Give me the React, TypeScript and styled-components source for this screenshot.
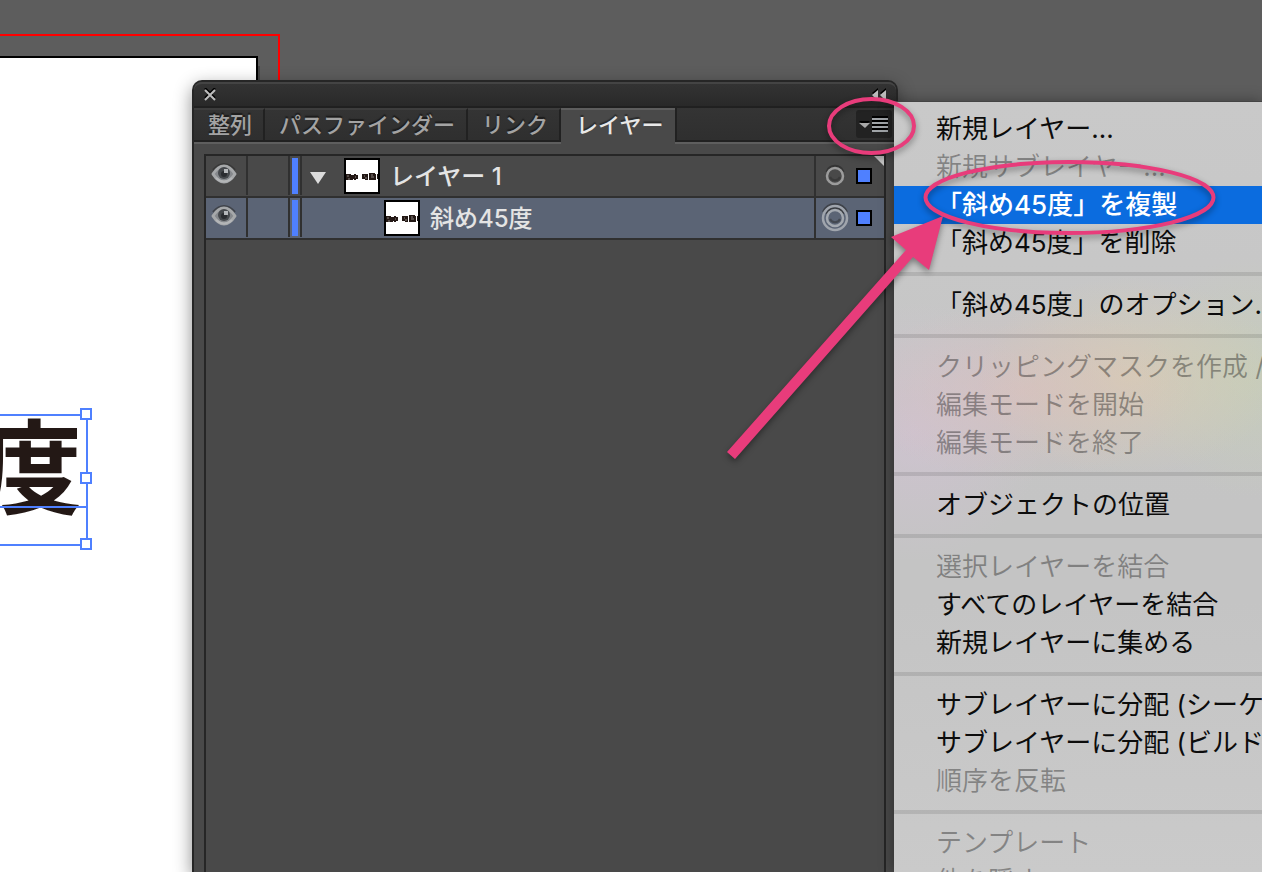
import React from "react";
import styled, { createGlobalStyle, css } from "styled-components";

const PINK = "#e83c7b";
const BLUE = "#4f80ff";
const EDGE = "#262626";

const GlobalStyle = createGlobalStyle`
  *, *::before, *::after { box-sizing: border-box; }
  html, body { margin: 0; padding: 0; }
  body { background: #5d5d5d; font-family: Inter, "Noto Sans CJK JP", sans-serif; font-weight: 500; }
  button { font: inherit; color: inherit; background: none; border: 0; padding: 0; margin: 0; }
`;

const Desktop = styled.main`
  position: relative;
  display: flex;
  align-items: stretch;
  height: 100vh;
  padding: 80px 0 0 192px;
  overflow: hidden;
  background: #5d5d5d;
`;

/* Document canvas */
const BleedLine = styled.div`
  position: absolute;
  left: 0;
  top: 34px;
  bottom: 0;
  width: 280px;
  border: solid #ff0000;
  border-width: 2px 2px 0 0;
`;

const Artboard = styled.div`
  position: absolute;
  left: 0;
  top: 56px;
  bottom: 0;
  width: 258px;
  background: #fff;
  border: solid #000;
  border-width: 2px 2px 0 0;
  box-shadow: 2px 10px 0 #464646;
`;

const CanvasText = styled.span`
  position: absolute;
  left: -20px;
  top: 406px;
  font: 700 102px/112px "Noto Sans CJK JP", sans-serif;
  color: #231815;
`;

const SelectionBox = styled.svg`
  position: absolute;
  left: 0;
  top: 400px;
`;

/* Layers panel */
const Panel = styled.section`
  position: relative;
  display: flex;
  flex-direction: column;
  flex: 0 0 706px;
  background: #494949;
  border: solid ${EDGE};
  border-width: 2px 2px 0;
  border-radius: 10px 10px 0 0;
  box-shadow: 0 6px 18px rgba(0, 0, 0, 0.45);
`;

const TitleBar = styled.header`
  display: flex;
  justify-content: space-between;
  align-items: center;
  height: 26px;
  padding: 0 9px;
  border-top: 2px solid #444;
  border-bottom: 2px solid #202020;
  border-radius: 8px 8px 0 0;
  background: linear-gradient(#333, #292929);
  flex: none;
`;

const IconButton = styled.button`
  display: flex;
  align-items: center;
  justify-content: center;
`;

const TabBar = styled.div`
  display: flex;
  flex: none;
  height: 36px;
  background: linear-gradient(#343434, #2e2e2e);
  box-shadow: inset 0 -2px #5e5e5e, inset 0 -4px #212121;
`;

const Tab = styled.button<{ $active?: boolean }>`
  height: 32px;
  padding: 0 11px 0 14px;
  border-top: 2px solid #3d3d3d;
  border-right: 2px solid #212121;
  font-size: 22px;
  line-height: 30px;
  white-space: nowrap;
  color: #a3a3a3;
  text-shadow: 0 -2px 1px #1c1c1c;
  ${(p) =>
    p.$active &&
    css`
      height: 36px;
      padding: 0 12px 4px 15px;
      background: #494949;
      border-top-color: #5e5e5e;
      border-right: 0;
      color: #e8e8e8;
      text-shadow: 0 -2px 1px #2c2c2c;
    `}
`;

const TabBarRest = styled.div`
  display: flex;
  flex: 1;
  justify-content: flex-end;
  height: 32px;
  padding: 2px 4px 0 0;
  border-left: 2px solid #212121;
`;

const PanelMenuButton = styled(IconButton)`
  width: 36px;
  height: 28px;
  border-radius: 3px;
  background: #222;
`;

const LayerList = styled.div`
  position: relative;
  flex: 1;
  margin: 10px 10px 0;
  border: solid ${EDGE};
  border-width: 2px 2px 0;
`;

const Row = styled.div<{ $selected?: boolean }>`
  display: flex;
  height: 42px;
  border-bottom: 2px solid #303030;
  background: ${(p) => (p.$selected ? "#5b6475" : "#494949")};
`;

const VisibilityCell = styled(IconButton)`
  width: 42px;
  height: 39px;
  padding: 0 4px 4px 0;
  border-right: 2px solid #303030;
`;

const LockCell = styled.div`
  width: 42px;
  height: 39px;
  border-right: 2px solid #303030;
`;

const ColorCell = styled.div`
  width: 12px;
  height: 39px;
  padding: 2px 2px 1px;
  border-right: 2px solid #303030;

  &::before {
    content: "";
    display: block;
    width: 6px;
    height: 36px;
    background: ${BLUE};
  }
`;

const NameCell = styled.div<{ $nested?: boolean }>`
  display: flex;
  align-items: center;
  flex: 1;
  height: 40px;
  padding-left: ${(p) => (p.$nested ? 82 : 8)}px;
  color: #e4e4e4;
  font-size: 24px;
  white-space: nowrap;
`;

const LayerName = styled.span`
  padding-top: 2px;
  line-height: 38px;
`;

const Thumb = styled.svg`
  flex: none;
  margin-right: 10px;
  background: #fff;
  border: 2px solid #000;
`;

const Disclosure = styled(IconButton)`
  width: 16px;
  margin-right: 18px;
`;

const TargetCell = styled.div`
  display: flex;
  align-items: center;
  gap: 6px;
  width: 70px;
  height: 40px;
  padding-left: 4px;
  border-left: 2px solid #303030;
`;

const SelectionSquare = styled.span`
  width: 16px;
  height: 16px;
  background: ${BLUE};
  border: 2px solid #000;
`;

const CornerMark = styled.svg`
  position: absolute;
  top: 0;
  right: 0;
`;

/* Flyout menu */
const Menu = styled.div`
  position: relative;
  flex: 1 0 0;
  min-width: 0;
  margin: 22px 0 0 -4px;
  padding-top: 8px;
  overflow: hidden;
  box-shadow: 0 -1px 0 #444, 0 0 14px rgba(0, 0, 0, 0.4);
  background:
    radial-gradient(ellipse 170px 90px at 130px 290px, rgba(222, 190, 188, 0.55), transparent),
    radial-gradient(ellipse 150px 100px at 235px 275px, rgba(218, 206, 176, 0.7), transparent),
    radial-gradient(ellipse 110px 120px at 355px 275px, rgba(198, 207, 182, 0.7), transparent),
    radial-gradient(ellipse 130px 130px at 20px 330px, rgba(210, 194, 212, 0.65), transparent),
    linear-gradient(#c9c9c9, #c4c4c4 400px, #c4c4c4 500px, #cacaca);
`;

const MenuItem = styled.button<{ $active?: boolean }>`
  display: block;
  width: 100%;
  height: 38px;
  padding-left: 42px;
  font-size: 26px;
  font-weight: ${(p) => (p.$active ? 500 : 400)};
  line-height: 38px;
  text-align: left;
  white-space: nowrap;
  color: ${(p) => (p.$active ? "#fff" : "#0c0c0c")};
  background: ${(p) => (p.$active ? "#0b6cdf" : "transparent")};

  &:disabled {
    color: rgba(0, 0, 0, 0.34);
  }
`;

const Separator = styled.hr`
  height: 4px;
  margin: 10px 0;
  border: 0;
  background: rgba(0, 0, 0, 0.1);
`;

const Annotations = styled.svg`
  position: absolute;
  left: 0;
  top: 0;
  pointer-events: none;
  filter: drop-shadow(0 3px 3px rgba(0, 0, 0, 0.4));
`;

const Eye = () => (
  <svg width="28" height="24" viewBox="0 0 28 24" fill="none">
    <path d="M3 8Q14 -4 25 8" stroke="#2d2d2d" strokeWidth="2" opacity=".6" />
    <path d="M3 12Q8 4 14 4T25 12Q20 20 14 20T3 12Z" fill="#85888c" stroke="#a6a8aa" strokeWidth="3" strokeLinejoin="round" />
    <circle cx="14" cy="11" r="6" fill="#45484c" />
    <circle cx="14" cy="12" r="3" fill="#2a2c30" />
    <path d="M14 7h4v4h-4z" fill="#b5b7ba" />
    <path d="M6 16Q14 23 22 16" stroke="#b4b6b8" strokeWidth="2" />
  </svg>
);

const LayerThumb = () => (
  <Thumb width="36" height="36" viewBox="0 0 32 32" aria-hidden="true">
    <path
      d="M0 14h5v1h2v5H0zM8 14h2v1h2v4h-2v1H8v-1H7v-4h1zM16 14h6v6h-3v-1h-3zM23 13h6v1h1v6h-7zM31 14h1v5h-1z"
      fill="#231815"
    />
    <path d="M1 16h2M9 17h1M18 16h1M19 18h2M25 15h2M25 17h3M2 19h2" stroke="#8c8583" />
  </Thumb>
);

const Target = ({ double }: { double?: boolean }) => (
  <svg width="30" height="30" viewBox="0 0 30 30" fill="none">
    <path d="M7 11a8.5 8.5 0 0 1 16 0" stroke="#2c2c2c" strokeWidth="3" opacity=".7" />
    <circle cx="15" cy="15" r="8" stroke={double ? "#a4a9b0" : "#9c9c9c"} strokeWidth="2.5" />
    <path d="M10 16a5.5 5.5 0 0 0 10 0" stroke="#2c2c2c" strokeWidth="2" opacity=".5" />
    {double && (
      <>
        <path d="M3 9a13 13 0 0 1 24 0" stroke="#2c2c2c" strokeWidth="2" opacity=".6" />
        <circle cx="15" cy="15" r="12" stroke="#a0a5ad" strokeWidth="2.5" />
      </>
    )}
  </svg>
);

type Entry = { label: string; disabled?: boolean; active?: boolean };

const menuGroups: Entry[][] = [
  [
    { label: "新規レイヤー..." },
    { label: "新規サブレイヤー...", disabled: true },
    { label: "「斜め45度」を複製", active: true },
    { label: "「斜め45度」を削除" },
  ],
  [{ label: "「斜め45度」のオプション..." }],
  [
    { label: "クリッピングマスクを作成 / 解除", disabled: true },
    { label: "編集モードを開始", disabled: true },
    { label: "編集モードを終了", disabled: true },
  ],
  [{ label: "オブジェクトの位置" }],
  [
    { label: "選択レイヤーを結合", disabled: true },
    { label: "すべてのレイヤーを結合" },
    { label: "新規レイヤーに集める" },
  ],
  [
    { label: "サブレイヤーに分配 (シーケンス)" },
    { label: "サブレイヤーに分配 (ビルド)" },
    { label: "順序を反転", disabled: true },
  ],
  [
    { label: "テンプレート", disabled: true },
    { label: "他を隠す", disabled: true },
  ],
];

const tabs = ["整列", "パスファインダー", "リンク", "レイヤー"];

export default function App() {
  return (
    <>
      <GlobalStyle />
      <Desktop>
        <BleedLine />
        <Artboard />
        <CanvasText>度</CanvasText>
        <SelectionBox width="96" height="160" viewBox="0 0 96 160" fill="none" stroke={BLUE} strokeWidth="2">
          <path d="M0 15H87V145H0M0 107H87" />
          <path fill="#fff" d="M81 9h10v10H81zM81 73h10v10H81zM81 139h10v10H81z" />
        </SelectionBox>

        <Panel aria-label="レイヤー">
          <TitleBar>
            <IconButton aria-label="閉じる">
              <svg width="14" height="14" viewBox="0 0 14 14" fill="none">
                <path d="M2 0L12 10M12 0L2 10" stroke="#000" strokeWidth="2" />
                <path d="M2 2L12 12M12 2L2 12" stroke="#bdbdbd" strokeWidth="2" />
              </svg>
            </IconButton>
            <IconButton aria-label="折りたたむ">
              <svg width="16" height="14" viewBox="0 0 16 14">
                <path d="M7 0v10L1 5zM15 0v10L9 5z" fill="#000" />
                <path d="M7 2v11L1 7zM15 2v11L9 7z" fill="#bdbdbd" />
              </svg>
            </IconButton>
          </TitleBar>
          <TabBar role="tablist">
            {tabs.map((t) => (
              <Tab key={t} role="tab" aria-selected={t === "レイヤー"} $active={t === "レイヤー"}>
                {t}
              </Tab>
            ))}
            <TabBarRest>
              <PanelMenuButton aria-label="パネルメニュー">
                <svg width="32" height="20" viewBox="0 0 32 20">
                  <path d="M1 7h11l-5 5z" fill="#000" />
                  <path d="M1 9h11l-5 5z" fill="#a8a8a8" />
                  <path d="M14 2h16v2H14zM14 6h16v2H14zM14 10h16v2H14zM14 14h16v2H14z" fill="#000" />
                  <path d="M14 4h16v2H14zM14 8h16v2H14zM14 12h16v2H14zM14 16h16v2H14z" fill="#a0a4a8" />
                </svg>
              </PanelMenuButton>
            </TabBarRest>
          </TabBar>
          <LayerList>
            <Row>
              <VisibilityCell aria-label="表示">
                <Eye />
              </VisibilityCell>
              <LockCell />
              <ColorCell />
              <NameCell>
                <Disclosure aria-label="展開">
                  <svg width="16" height="16" viewBox="0 0 16 16">
                    <path d="M0 4h16L8 16z" fill="#dcdcdc" />
                  </svg>
                </Disclosure>
                <LayerThumb />
                <LayerName>レイヤー 1</LayerName>
              </NameCell>
              <TargetCell>
                <Target />
                <SelectionSquare />
              </TargetCell>
            </Row>
            <Row $selected>
              <VisibilityCell aria-label="表示">
                <Eye />
              </VisibilityCell>
              <LockCell />
              <ColorCell />
              <NameCell $nested>
                <LayerThumb />
                <LayerName>斜め45度</LayerName>
              </NameCell>
              <TargetCell>
                <Target double />
                <SelectionSquare />
              </TargetCell>
            </Row>
            <CornerMark width="10" height="10" viewBox="0 0 10 10">
              <path d="M0 0h10v10z" fill="#c4c4c4" />
            </CornerMark>
          </LayerList>
        </Panel>

        <Menu role="menu">
          {menuGroups.map((group, i) => (
            <React.Fragment key={i}>
              {i > 0 && <Separator />}
              {group.map((e) => (
                <MenuItem key={e.label} role="menuitem" disabled={e.disabled} $active={e.active}>
                  {e.label}
                </MenuItem>
              ))}
            </React.Fragment>
          ))}
        </Menu>

        <Annotations width="100%" height="480" aria-hidden="true">
          <g fill="none" stroke={PINK} strokeWidth="4">
            <ellipse cx="871.5" cy="126" rx="42.5" ry="27" />
            <ellipse cx="1069.5" cy="197.5" rx="144" ry="35.5" />
          </g>
          <path d="M943 216L891 237L906 250L727 452L735 459L913 257L929 270Z" fill={PINK} />
        </Annotations>
      </Desktop>
    </>
  );
}
